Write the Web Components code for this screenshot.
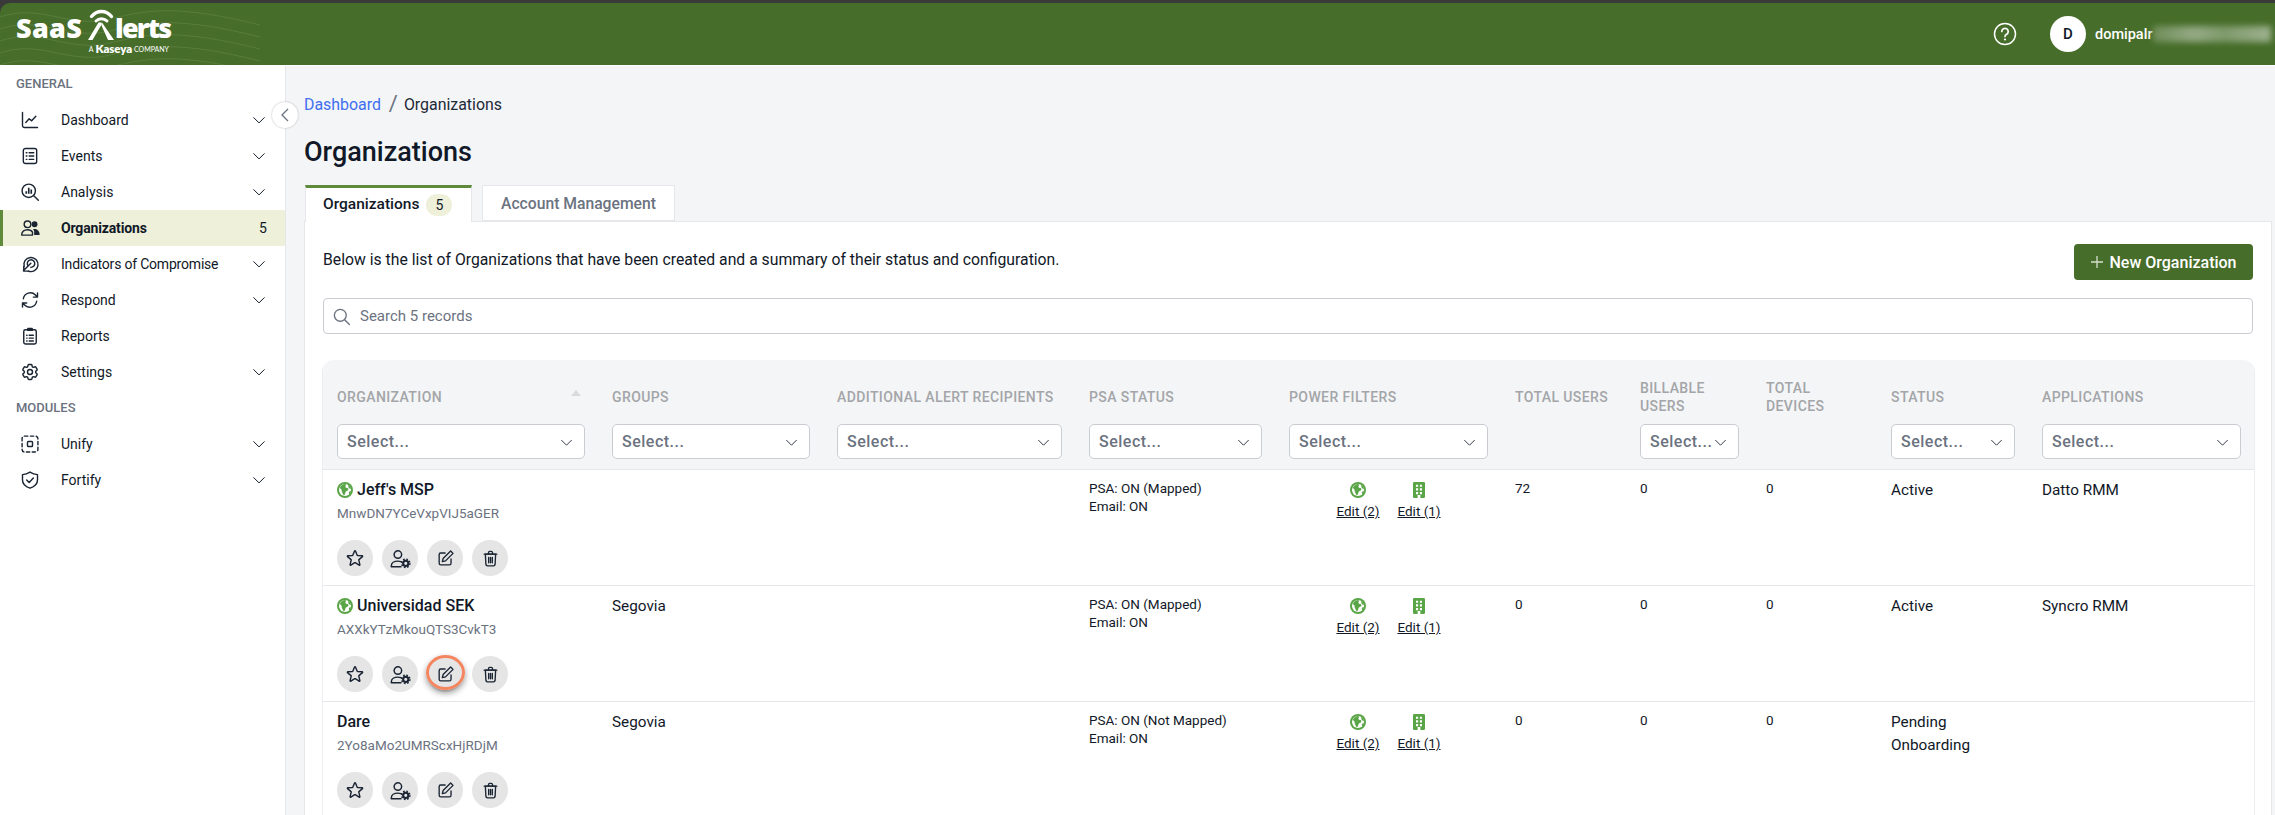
<!DOCTYPE html>
<html lang="en">
<head>
<meta charset="utf-8">
<title>Organizations</title>
<style>
html,body{margin:0;height:815px;overflow:hidden;background:#f4f5f7;font-family:Roboto,"Liberation Sans",sans-serif;color:#111827}
sa-app{display:block;height:815px}
</style>
</head>
<body>
<sa-app>
  <sa-header slot="header"></sa-header>
  <sa-sidebar slot="sidebar">
    <sa-nav-head>GENERAL</sa-nav-head>
    <sa-nav-item icon="chart" chevron>Dashboard</sa-nav-item>
    <sa-nav-item icon="list" chevron>Events</sa-nav-item>
    <sa-nav-item icon="analysis" chevron>Analysis</sa-nav-item>
    <sa-nav-item icon="people" active count="5">Organizations</sa-nav-item>
    <sa-nav-item icon="target" chevron style="letter-spacing:-.2px">Indicators of Compromise</sa-nav-item>
    <sa-nav-item icon="refresh" chevron>Respond</sa-nav-item>
    <sa-nav-item icon="clipboard">Reports</sa-nav-item>
    <sa-nav-item icon="gear" chevron>Settings</sa-nav-item>
    <sa-nav-head>MODULES</sa-nav-head>
    <sa-nav-item icon="unify" chevron>Unify</sa-nav-item>
    <sa-nav-item icon="shield" chevron>Fortify</sa-nav-item>
  </sa-sidebar>
  <sa-main slot="main">
    <sa-breadcrumb></sa-breadcrumb>
    <sa-title>Organizations</sa-title>
    <sa-tabs></sa-tabs>
    <sa-panel>
      <sa-intro>Below is the list of Organizations that have been created and a summary of their status and configuration.</sa-intro>
      <sa-search></sa-search>
      <sa-table>
        <sa-table-head></sa-table-head>
        <sa-org-row globe>
          <span slot="name">Jeff's MSP</span><span slot="id">MnwDN7YCeVxpVIJ5aGER</span>
          <span slot="psa">PSA: ON (Mapped)<br>Email: ON</span>
          <span slot="users">72</span><span slot="billable">0</span><span slot="devices">0</span>
          <span slot="status">Active</span><span slot="app">Datto RMM</span>
        </sa-org-row>
        <sa-org-row globe highlight>
          <span slot="name">Universidad SEK</span><span slot="id">AXXkYTzMkouQTS3CvkT3</span>
          <span slot="groups">Segovia</span>
          <span slot="psa">PSA: ON (Mapped)<br>Email: ON</span>
          <span slot="users">0</span><span slot="billable">0</span><span slot="devices">0</span>
          <span slot="status">Active</span><span slot="app">Syncro RMM</span>
        </sa-org-row>
        <sa-org-row>
          <span slot="name">Dare</span><span slot="id">2Yo8aMo2UMRScxHjRDjM</span>
          <span slot="groups">Segovia</span>
          <span slot="psa">PSA: ON (Not Mapped)<br>Email: ON</span>
          <span slot="users">0</span><span slot="billable">0</span><span slot="devices">0</span>
          <span slot="status">Pending Onboarding</span>
        </sa-org-row>
      </sa-table>
    </sa-panel>
  </sa-main>
</sa-app>
<script>
const s='fill="none" stroke="currentColor" stroke-width="1.7" stroke-linecap="round" stroke-linejoin="round"';
const ICONS={
 chart:`<path ${s} d="M3 3v15.500A2.500 2.500 0 0 0 5.500 21H21"/><path ${s} d="M7 15l4-4.500 3 2.500 5-5.500"/>`,
 list:`<rect ${s} stroke-width="2" x="4" y="3" width="16" height="18" rx="2.500"/><path ${s} d="M7.500 8h.8M11 8h5.500M7.500 12h.8M11 12h5.500M7.500 16h.8M11 16h5.500"/>`,
 analysis:`<circle ${s} stroke-width="2" cx="10.500" cy="10.500" r="8"/><path ${s} stroke-width="2" d="M16.500 16.500l5.500 5.500"/><path fill="none" stroke="currentColor" stroke-width="2" d="M7.500 14v-3M10.500 14V7M13.500 14v-5"/>`,
 people:`<circle ${s} cx="9" cy="7.500" r="4"/><circle fill="currentColor" cx="17.500" cy="7.500" r="3.500"/><path ${s} d="M2 20.500c0-4 3-6.500 7-6.500 3 0 5 1.200 6 3v3.500z"/><path fill="currentColor" d="M15.500 13.500c4-1 8 1.500 8 6v1h-6.500v-4.500c0-1-.7-1.800-1.500-2.500z"/>`,
 target:`<path ${s} d="M5 15a8.500 8.500 0 1 1 5 5.500"/><path ${s} d="M9.500 14a4.500 4.500 0 1 1 3.500 2"/><path ${s} stroke-width="2.400" d="M13 11L4 20M4.500 15v5.500H10"/>`,
 refresh:`<path ${s} stroke-width="2" d="M4 10.500A8.500 8.500 0 0 1 18.500 6L21 8.500M21 3.500v5h-5M20 13.500A8.500 8.500 0 0 1 5.500 18L3 15.500M3 20.500v-5h5"/>`,
 clipboard:`<rect ${s} stroke-width="2" x="4.500" y="4.500" width="15" height="17" rx="2"/><rect x="8.500" y="2" width="7" height="4" rx="1" fill="currentColor"/><path ${s} d="M8 11h.5M11 11h5M8 14.500h.5M11 14.500h5M8 18h.5M11 18h5"/>`,
 gear:`<path ${s} d="M9.594 3.94c.09-.542.56-.94 1.11-.94h2.593c.55 0 1.02.398 1.11.94l.213 1.281c.063.374.313.686.645.87.074.04.147.083.22.127.325.196.72.257 1.075.124l1.217-.456a1.125 1.125 0 0 1 1.37.49l1.296 2.247a1.125 1.125 0 0 1-.26 1.431l-1.003.827c-.293.241-.438.613-.43.992a7.723 7.723 0 0 1 0 .255c-.008.378.137.75.43.991l1.004.827c.424.35.534.955.26 1.43l-1.298 2.247a1.125 1.125 0 0 1-1.369.491l-1.217-.456c-.355-.133-.75-.072-1.076.124a6.47 6.47 0 0 1-.22.128c-.331.183-.581.495-.644.869l-.213 1.281c-.09.543-.56.94-1.11.94h-2.594c-.55 0-1.019-.398-1.11-.94l-.213-1.281c-.062-.374-.312-.686-.644-.87a6.52 6.52 0 0 1-.22-.127c-.325-.196-.72-.257-1.076-.124l-1.217.456a1.125 1.125 0 0 1-1.369-.49l-1.297-2.247a1.125 1.125 0 0 1 .26-1.431l1.004-.827c.292-.24.437-.613.43-.991a6.932 6.932 0 0 1 0-.255c.007-.38-.138-.751-.43-.992l-1.004-.827a1.125 1.125 0 0 1-.26-1.43l1.297-2.247a1.125 1.125 0 0 1 1.37-.491l1.216.456c.356.133.751.072 1.076-.124.072-.044.146-.086.22-.128.332-.183.582-.495.644-.869l.214-1.28Z"/><circle ${s} cx="12" cy="12" r="3"/>`,
 unify:`<rect ${s} stroke-width="2" stroke-dasharray="4 3" x="2.500" y="2.500" width="19" height="19" rx="3"/><rect ${s} stroke-width="2" x="9" y="9" width="6" height="6" rx="1"/>`,
 shield:`<path ${s} stroke-width="2" d="M12 2.500c3 2 5.500 2.800 9 3v6.500c0 4.500-3.500 8-9 9.800C6.500 20 3 16.500 3 12V5.500c3.500-.2 6-1 9-3z"/><path ${s} stroke-width="2" d="M8 12l3 3 5-5.500"/>`,
 star:`<path ${s} stroke-width="2" d="M11.48 3.499a.562.562 0 0 1 1.04 0l2.125 5.111a.563.563 0 0 0 .475.345l5.518.442c.499.04.701.663.321.988l-4.204 3.602a.563.563 0 0 0-.182.557l1.285 5.385a.562.562 0 0 1-.84.61l-4.725-2.885a.562.562 0 0 0-.586 0L6.982 20.54a.562.562 0 0 1-.84-.61l1.285-5.386a.562.562 0 0 0-.182-.557l-4.204-3.602a.562.562 0 0 1 .321-.988l5.518-.442a.563.563 0 0 0 .475-.345L11.48 3.5Z"/>`,
 usergear:`<circle ${s} stroke-width="2" cx="9" cy="7.500" r="4.300"/><path ${s} stroke-width="2" d="M1.500 21.500v-1C1.500 17 5 15 9 15c1.300 0 2.500.2 3.500.6M1.500 21.500h11"/><circle cx="18" cy="17.500" r="3" fill="none" stroke="currentColor" stroke-width="2.400"/><circle cx="18" cy="17.500" r="4.800" fill="none" stroke="currentColor" stroke-width="1.600" stroke-dasharray="2 1.770"/>`,
 edit:`<path ${s} stroke-width="2" d="M11.500 5H6a2 2 0 0 0-2 2v11a2 2 0 0 0 2 2h11a2 2 0 0 0 2-2v-5.500"/><path ${s} stroke-width="2" d="M18.500 2.500l3 3-9.500 9.500-4 1 1-4z"/>`,
 trash:`<path ${s} stroke-width="2" d="M5.500 6.500h13l-.7 13a2 2 0 0 1-2 1.800H8.200a2 2 0 0 1-2-1.800z"/><path ${s} stroke-width="2" d="M4 6.500h16M9.500 6V4.500a1.500 1.500 0 0 1 1.500-1.500h2a1.500 1.500 0 0 1 1.500 1.500V6M9.700 10.500v7M12 10.500v7M14.300 10.500v7"/>`,
 search:`<circle ${s} stroke-width="1.500" cx="10.500" cy="10.500" r="7.500"/><path ${s} stroke-width="1.500" d="M16 16l6 6"/>`,
 chev:`<path ${s} stroke-width="2" d="M3 8l9 9 9-9"/>`,
 globe:`<circle cx="12" cy="12" r="12" fill="#5aa547"/><circle cx="12" cy="12" r="9" fill="#fff"/><path fill="#5aa547" d="M4 9c2-4 5-6 9-6 1 2-1 3 0 5s4 0 4 3-3 2-4 4-1 5-3 5c-1-3-3-4-3-7s-2-3-3-4zM17 4.500c2 1 3.500 3 4 5.500-1.500.5-3 0-3.500-1.500s-1-2.500-.5-4zM18 14.500c1-.5 2-.5 3-.5-.3 1.800-1.200 3.500-2.500 4.700-.8-1.300-1-2.800-.5-4.200z"/>`,
 building:`<rect x="3" y="0" width="18" height="24" rx="2" fill="#5aa547"/><path fill="#fff" d="M7.500 4h3.200v3.200H7.500zM13.300 4h3.200v3.200h-3.200zM7.500 9.500h3.200v3.200H7.500zM13.300 9.500h3.200v3.200h-3.200zM7.500 15h3.200v3.200H7.500zM13.300 15h3.200v3.200h-3.200zM10 19.500h4V24h-4z"/>`
};
function icon(n,w){return `<svg viewBox="0 0 24 24" width="${w}" height="${w}" aria-hidden="true" style="display:block;flex:none">${ICONS[n]}</svg>`}
function def(name,css,html){
 customElements.define(name,class extends HTMLElement{
  constructor(){super();this.attachShadow({mode:'open'});}
  connectedCallback(){
   const h=typeof html==='function'?html(this):html;
   this.shadowRoot.innerHTML=`<style>${css}</style>${h}`;
  }
 });
}
const COLS='275px 225px 252px 200px 226px 125px 126px 125px 151px 226px';

def('sa-app',`:host{display:flex;flex-direction:column;height:815px;position:relative;overflow:hidden}
 .body{flex:1;display:flex;min-height:0;position:relative}
 .toggle{position:absolute;left:272px;top:36px;width:26px;height:26px;border-radius:50%;background:#fff;box-shadow:0 0 2px rgba(0,0,0,.3);display:flex;align-items:center;justify-content:center;color:#6b7280;z-index:3}`,
 `<slot name="header"></slot><div class="body"><slot name="sidebar"></slot><slot name="main"></slot>
  <div class="toggle"><svg width="10" height="14" viewBox="0 0 10 14"><path d="M8 1L2 7l6 6" fill="none" stroke="currentColor" stroke-width="1.300"/></svg></div></div>`);

def('sa-header',`:host{display:block;background:#3a3a3a;padding-top:3px;height:62px;border-bottom:1px solid #fff;color:#fff}
 .bar{height:62px;background:#466d29;border-top-left-radius:10px;display:flex;align-items:center;position:relative;overflow:hidden;padding:0 0 0 16px}
 .wave{position:absolute;left:0;top:0;width:260px;height:62px;opacity:.1}
 .logo{position:relative;display:flex;flex-direction:column;align-items:flex-end;width:153px;margin-top:-1px}
 .main{display:flex;align-items:flex-end;height:30px;font:800 27px/27px "Open Sans",sans-serif;align-self:flex-start;white-space:nowrap}
 .main span{display:block;height:27px;line-height:27px;overflow:visible}
 .saas{letter-spacing:.3px}
 .lerts{letter-spacing:-1.800px}
 .main svg{margin:0 0 0 6px;display:block;position:relative;top:-1px}
 .sub{display:flex;align-items:center;gap:2px;font:400 7px/14px Lato,sans-serif;margin-top:1px;white-space:nowrap}
 .sub b{font:800 11.500px/14px Lato,sans-serif;letter-spacing:-.1px}
 .right{margin-left:auto;display:flex;align-items:center;width:282px;flex:none}
 .help{width:24px;height:24px;margin-right:33px;flex:none}
 .av{width:36px;height:36px;border-radius:50%;background:#fff;color:#111827;display:flex;align-items:center;justify-content:center;font:500 15px Roboto,sans-serif;flex:none}
 .name{font:500 14.500px Roboto,sans-serif;margin-left:9px}
 .blur{flex:none;width:118px;height:16px;background:linear-gradient(90deg,#6f8d58,#95aa85 35%,#7f9a6b 60%,#9eb190);filter:blur(3px)}`,
 `<div class="bar">
   <svg class="wave" viewBox="0 0 260 62"><g fill="none" stroke="#fff" stroke-width="1"><path d="M0 14c40-14 70 12 110 2s70-14 150 6"/><path d="M0 26c40-14 70 12 110 2s70-14 150 6"/><path d="M0 38c40-14 70 12 110 2s70-14 150 6"/><path d="M0 50c40-14 70 12 110 2s70-14 150 6"/><path d="M0 62c40-14 70 12 110 2s70-14 150 6"/></g></svg>
   <div class="logo">
    <div class="main"><span class="saas">SaaS</span>
      <svg width="27" height="31" viewBox="0 0 27 31"><g fill="none" stroke="#fff" stroke-linecap="round"><path stroke-width="3.400" d="M3.500 7.500C9 .8 18 .8 23.500 7.500"/><path stroke-width="3" d="M8 12c3-3 8-3 11 0"/></g><path fill="#fff" d="M10.500 13.500h3l-.5 3L4.500 31H0zM14 13.500h-1l.5 3L20 31h6z"/></svg>
      <span class="lerts">lerts</span></div>
    <div class="sub"><span>A</span><b>Kaseya</b><span>COMPANY</span></div>
   </div>
   <div class="right">
    <svg class="help" viewBox="0 0 24 24"><circle cx="12" cy="12" r="10.500" fill="none" stroke="#fff" stroke-width="1.500"/><path d="M8.800 9.500a3.200 3.200 0 1 1 4.800 2.800c-1 .6-1.600 1.200-1.600 2.200" fill="none" stroke="#fff" stroke-width="1.700" stroke-linecap="round"/><circle cx="12" cy="17.500" r="1.100" fill="#fff"/></svg>
    <div class="av">D</div><div class="name">domipalr</div><div class="blur"></div>
   </div>
  </div>`);

def('sa-sidebar',`:host{display:block;width:285px;flex:none;background:#fff;border-right:1px solid #e5e7eb}`,`<slot></slot>`);
def('sa-nav-head',`:host{display:block;height:36px;padding-left:16px;font:500 13px/36px Roboto,sans-serif;color:#6b7280}`,`<slot></slot>`);
def('sa-nav-item',`:host{display:flex;align-items:center;height:36px;font-size:14px;color:#111827;box-sizing:border-box;padding-left:20px;padding-right:19px}
 :host([active]){background:#eef0d9;border-left:3px solid #5f8a3c;padding-left:17px;font-weight:700;letter-spacing:-.15px;color:#111827}
 .ic{width:20px;flex:none;margin-right:21px;color:#1a2433}
 .l{flex:1;white-space:nowrap}
 .c{font-weight:400;width:14px;text-align:center;margin-right:-4px;letter-spacing:0}
 .ch{color:#111827}`,
 el=>`<span class="ic">${icon(el.getAttribute('icon'),20)}</span><span class="l"><slot></slot></span>${el.hasAttribute('chevron')?`<span class="ch">${icon('chev',14)}</span>`:''}${el.hasAttribute('count')?`<span class="c">${el.getAttribute('count')}</span>`:''}`);

def('sa-main',`:host{display:block;flex:1;min-width:0;padding:26px 3px 0 18px;background:#f4f5f7}`,`<slot></slot>`);
def('sa-breadcrumb',`:host{display:flex;align-items:center;height:24px;font-size:15.900px;color:#1f2937}
 a{color:#3f6ff0;text-decoration:none}.sep{margin:0 6px 0 8px;color:#6b7280;font-size:22px;line-height:24px}`,`<a href="#">Dashboard</a><span class="sep">/</span><span>Organizations</span>`);
def('sa-title',`:host{display:block;margin-top:20px;font:500 27px/32px Roboto,sans-serif;color:#111827}`,`<slot></slot>`);
def('sa-tabs',`:host{display:flex;gap:10px;margin:17px 0 -1px 1px;height:37px;position:relative;z-index:1;align-items:flex-start}
 .t{box-sizing:border-box;height:37px;display:flex;align-items:center;font:500 15.500px Roboto,sans-serif;background:#fff}
 .a{width:167px;padding:0 0 2px 17px;border-top:3px solid #5f8a3c;border-left:1px solid #e5e7eb;border-right:1px solid #e5e7eb;color:#111827}
 .b{margin-left:7px;width:26px;height:22px;border-radius:11px;background:#eef0d9;display:flex;align-items:center;justify-content:center;font-weight:400;font-size:14px;margin-top:2px}
 .i{width:193px;height:36px;padding-left:18px;border:1px solid #e5e7eb;color:#6b7280;font-size:15.700px}`,
 `<div class="t a">Organizations<span class="b">5</span></div><div class="t i">Account Management</div>`);
def('sa-panel',`:host{display:block;background:#fff;border:1px solid #e5e7eb;padding:22px 18px 0;height:760px;box-sizing:border-box}`,`<slot></slot>`);
def('sa-intro',`:host{display:flex;align-items:center;justify-content:space-between;height:36px;font-size:15.750px;color:#111827}
 .btn{width:179px;height:36px;background:#466d29;border-radius:4px;color:#fff;display:flex;align-items:center;justify-content:center;gap:5px;font:500 16px Roboto,sans-serif;box-sizing:border-box}
 .txt{margin-top:-5px}`,
 `<span class="txt"><slot></slot></span><div class="btn"><svg width="14" height="14" viewBox="0 0 14 14"><path d="M7 1v12M1 7h12" stroke="#d5dfcc" stroke-width="1.300"/></svg>New Organization</div>`);
def('sa-search',`:host{display:flex;align-items:center;height:36px;box-sizing:border-box;margin-top:18px;border:1px solid #c9ccd1;border-radius:4px;padding-left:8px;color:#6b7280;font-size:15px;background:#fff}
 span{margin-left:9px}`,
 ()=>`${icon('search',19)}<span>Search 5 records</span>`);
def('sa-table',`:host{display:block;margin:26px -2px 0 -1px;border:1px solid #eceef1;border-width:0 1px;border-radius:12px 12px 0 0;overflow:hidden}`,`<slot></slot>`);
def('sa-select',`:host{display:flex;align-items:center;height:35px;box-sizing:border-box;background:#fff;border:1px solid #c9ccd1;border-radius:5px;padding:0 11px 0 9px;font:500 16px Roboto,sans-serif;letter-spacing:.5px;color:#6b7280;justify-content:space-between}
 span{white-space:nowrap}.c{color:#1f2937;margin-top:2px}`,
 ()=>`<span>Select...</span><span class="c">${icon('chev',13)}</span>`);
const HEAD=[['ORGANIZATION',1,1],['GROUPS',1],['ADDITIONAL ALERT RECIPIENTS',1],['PSA STATUS',1],['POWER FILTERS',1],['TOTAL USERS',0],['BILLABLE USERS',1],['TOTAL DEVICES',0],['STATUS',1],['APPLICATIONS',1]];
def('sa-table-head',`:host{display:grid;grid-template-columns:${COLS};background:#f4f5f7;border-bottom:1px solid #e5e7eb;height:110px;box-sizing:border-box;padding-top:19px}
 .h{padding:0 13px 0 14px;position:relative;display:flex;flex-direction:column}
 .l{height:36px;display:flex;align-items:center;font:500 14px/18px Roboto,sans-serif;letter-spacing:.4px;color:#a3a5a8;margin-bottom:9px}
 .tri{position:absolute;left:248px;top:11px;width:0;height:0;border:5px solid transparent;border-bottom:6px solid #d9dadc;border-top:0}
 sa-select{width:100%}`,
 ()=>HEAD.map(h=>`<div class="h"><div class="l">${h[0]}</div>${h[2]?'<span class="tri"></span>':''}${h[1]?'<sa-select></sa-select>':''}</div>`).join(''));
def('sa-org-row',`:host{display:grid;grid-template-columns:${COLS};height:116px;box-sizing:border-box;border-bottom:1px solid #e5e7eb;background:#fff}
 .c{padding:9px 13px 0 14px;font-size:13.500px;line-height:18px;color:#111827;min-width:0}
 .big{font-size:15.300px;line-height:23px}
 .name{display:flex;align-items:center;gap:4px;height:22px;font:500 16px/22px Roboto,sans-serif;color:#111827}
 .id{margin-top:3px;height:18px;font-size:13.500px;line-height:18px;color:#6b7280;white-space:nowrap}
 .acts{display:flex;gap:9px;margin-top:18px;position:relative}
 .btn{width:36px;height:36px;border-radius:50%;background:#e5e5e5;display:flex;align-items:center;justify-content:center;color:#1a2433;flex:none}
 .ring{position:absolute;left:89px;top:-1px;width:39px;height:35px;box-sizing:border-box;border:3px solid #f4855f;border-radius:50%;box-shadow:0 3px 6px rgba(0,0,0,.4)}
 .pf{display:flex;padding-left:47px;gap:17px;margin-top:3px}
 .pf div{display:flex;flex-direction:column;align-items:center;gap:4px;width:44px}
 .pf u{font-size:13.500px;line-height:18px;white-space:nowrap}`,
 el=>`<div class="c"><div class="name">${el.hasAttribute('globe')?icon('globe',16):''}<slot name="name"></slot></div><div class="id"><slot name="id"></slot></div>
   <div class="acts"><span class="btn">${icon('star',20)}</span><span class="btn">${icon('usergear',21)}</span><span class="btn">${icon('edit',19)}</span><span class="btn">${icon('trash',19)}</span>${el.hasAttribute('highlight')?'<span class="ring"></span>':''}</div></div>
  <div class="c big"><slot name="groups"></slot></div><div class="c"></div><div class="c"><slot name="psa"></slot></div>
  <div class="c"><div class="pf"><div>${icon('globe',16)}<u>Edit (2)</u></div><div>${icon('building',16)}<u>Edit (1)</u></div></div></div>
  <div class="c"><slot name="users"></slot></div><div class="c"><slot name="billable"></slot></div><div class="c"><slot name="devices"></slot></div>
  <div class="c big"><slot name="status"></slot></div><div class="c big"><slot name="app"></slot></div>`);
</script>
</body>
</html>
